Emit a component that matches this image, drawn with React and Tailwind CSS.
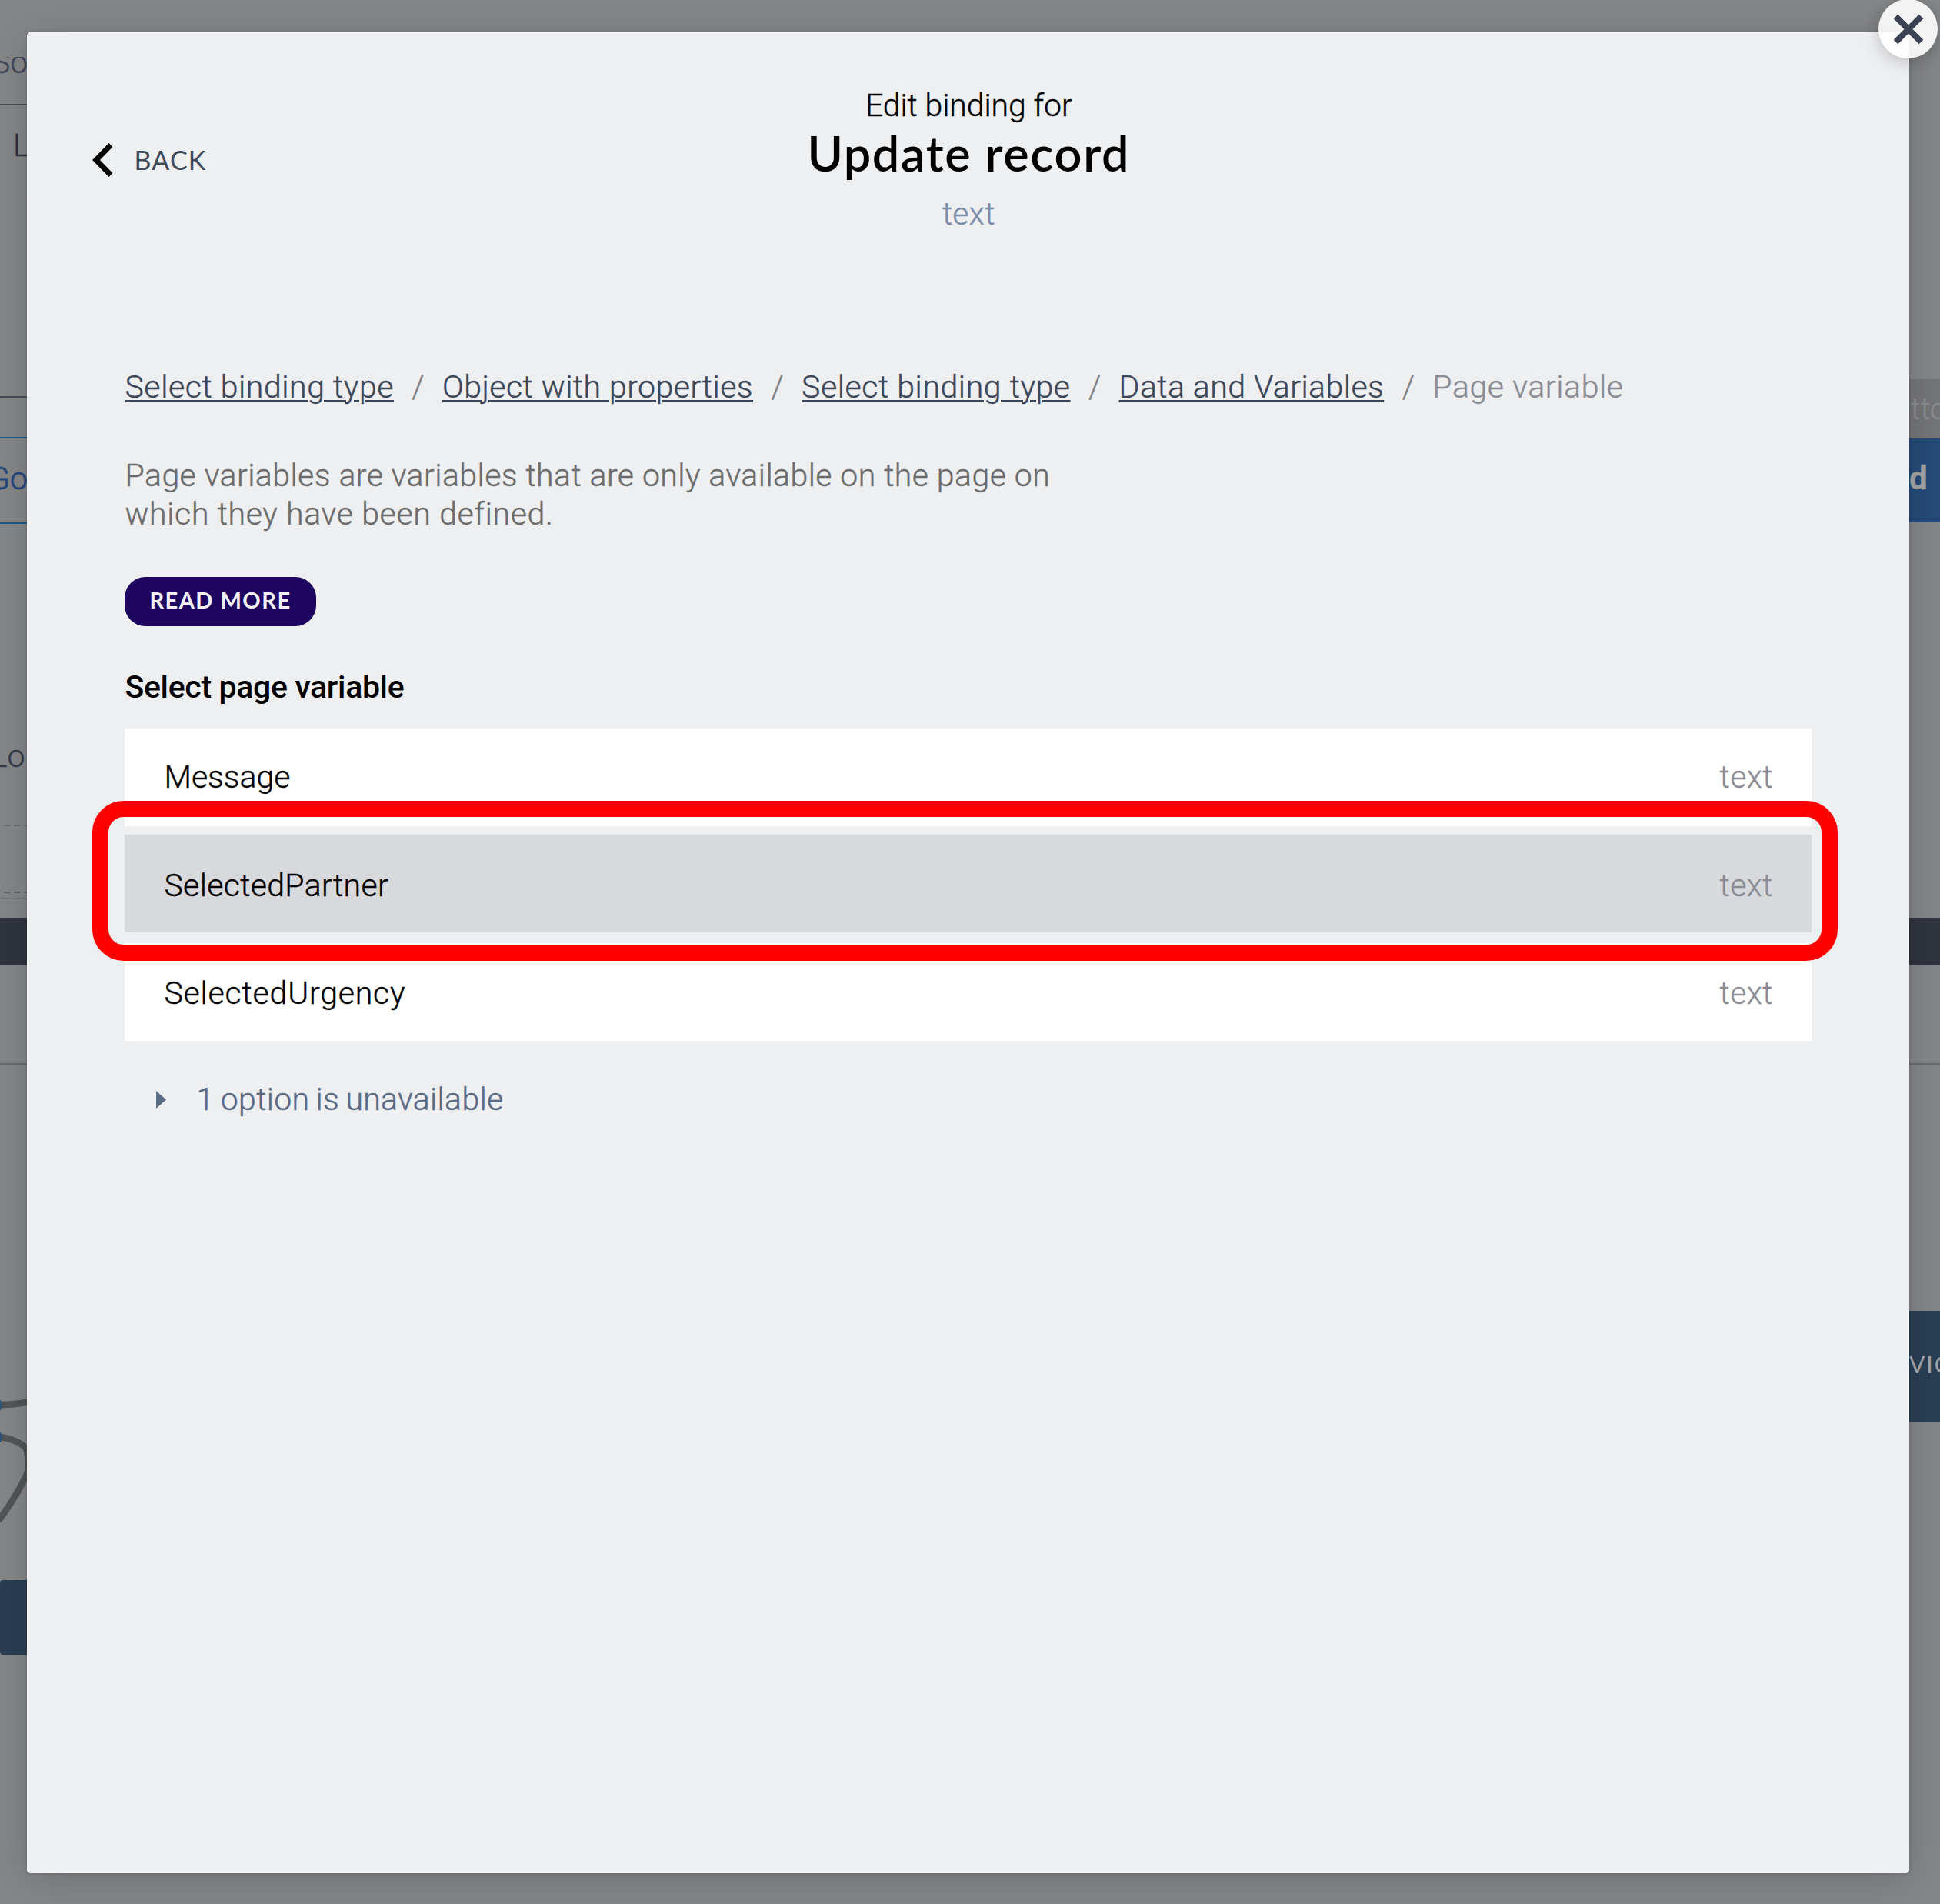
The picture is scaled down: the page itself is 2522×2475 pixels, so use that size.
const breadcrumbs = [
  { label: "Select binding type", tracking: "tracking-[0.57px]" },
  { label: "Object with properties", tracking: "tracking-[0.48px]" },
  { label: "Select binding type", tracking: "tracking-[0.57px]" },
  { label: "Data and Variables", tracking: "tracking-[0.45px]" },
];

const variables = [
  { name: "Message", type: "text", row: "h-[127px] bg-white pb-px pl-[52px]", tracking: "tracking-[-0.05px]" },
  {
    name: "SelectedPartner",
    type: "text",
    row: "mt-[11px] h-[127px] bg-[#d8d9dd] pt-[4px] pl-[52px]",
    tracking: "tracking-[0.32px]",
  },
  {
    name: "SelectedUrgency",
    type: "text",
    row: "mt-[14px] h-[127px] bg-white pt-[3px] pl-[52px]",
    tracking: "tracking-[0.8px]",
  },
];

function DashedLine() {
  return (
    <div className="h-[2px] bg-[repeating-linear-gradient(90deg,#646567_0px,#646567_8px,transparent_8px,transparent_13px)]" />
  );
}

function LeftCanvas() {
  return (
    <div className="flex h-full w-[35px] flex-col overflow-hidden whitespace-nowrap">
      <div className="mt-[74px] h-[61px] shrink-0 overflow-hidden">
        <p className="-mt-[18px] -ml-[11px] text-[#3f4858]">So</p>
      </div>
      <div className="h-[382px] shrink-0 border-y-2 border-[#474b56]">
        <p className="mt-[27px] ml-[17px] text-[#2b313c]">L</p>
      </div>
      <div className="mt-[51px] h-[113px] shrink-0 border-y-2 border-[#1c5a88]">
        <p className="mt-[27px] -ml-[15px] text-[#25497c] [-webkit-text-stroke:0.8px]">Go</p>
      </div>
      <p className="mt-[277px] -ml-[12px] text-[#353c49]">Lo</p>
      <div className="mt-[64px] ml-[5px] flex h-[89px] shrink-0 flex-col justify-between">
        <DashedLine />
        <DashedLine />
      </div>
      <div className="mt-[6px] h-[2px] shrink-0 bg-[#747577]" />
      <div className="mt-[24px] h-[62px] shrink-0 bg-[#2f343e]" />
      <div className="mt-[127px] h-[2px] shrink-0 bg-[#6a6b6d]" />
      <svg className="mt-[426px] h-[180px] w-[36px] shrink-0" viewBox="0 0 36 180" fill="none">
        <g stroke="#535456" strokeWidth="8.500">
          <path d="M0 16 Q20 16 36 12.500" />
          <path d="M0 58 C14 60 32 66 35 76 C38 92 38 100 34 108 C26 125 12 148 -2 167" />
        </g>
        <ellipse cx="0" cy="16.500" rx="3" ry="6.500" fill="#2f5577" />
        <ellipse cx="0" cy="58.500" rx="3" ry="6.500" fill="#2f5577" />
      </svg>
      <div className="mt-[64px] h-[97px] shrink-0 rounded-l-[4px] bg-[#293e53]" />
    </div>
  );
}

function RightCanvas() {
  return (
    <div className="flex h-full w-[41px] flex-col overflow-hidden whitespace-nowrap">
      <div className="mt-[493px] h-[77px] shrink-0 bg-[#747577] pt-[14px] text-[38px]">
        <p className="ml-[3px] tracking-[0.5px] text-[#8c8d91]">tto</p>
      </div>
      <div className="h-[109px] shrink-0 bg-[#264b78] pt-[27px] text-[42px]">
        <p className="ml-px font-bold text-[#a2a3a5]">d</p>
      </div>
      <div className="mt-[514px] h-[62px] shrink-0 bg-[#2f343e]" />
      <div className="mt-[127px] h-[2px] shrink-0 bg-[#6a6b6d]" />
      <div className="mt-[320px] h-[144px] shrink-0 bg-[#293f54] pt-[44px] font-[Lato,sans-serif] text-[30px] font-normal [-webkit-text-stroke:0px]">
        <p className="ml-px tracking-[2px] text-[#a5a8ab]">VIC</p>
      </div>
    </div>
  );
}

export default function App() {
  return (
    <div className="relative h-[2475px] w-[2522px] overflow-hidden bg-[#858688] font-[Roboto,sans-serif] text-[41px] leading-[50px] font-light text-black [-webkit-text-stroke:0.4px]">
      <div className="flex h-full justify-between">
        <LeftCanvas />
        <RightCanvas />
      </div>

      <section className="absolute top-[42px] left-[34.5px] h-[2393px] w-[2447.500px] rounded-[5px] bg-[#eeeff1] shadow-[0_8px_50px_rgba(0,0,0,0.16),0_0_4px_rgba(0,0,0,0.2),inset_0_0_0_1.5px_#f5f6f7]">
        <header className="grid grid-cols-[1fr_auto_1fr] pt-[70px]">
          <button className="mt-[74px] ml-[85.5px] flex h-[44px] items-center gap-[27.5px] justify-self-start font-[Lato,sans-serif] text-[34px] leading-[44px] font-normal tracking-[1.2px] text-[#414a5b] [-webkit-text-stroke:0px]">
            <svg className="h-[44px] w-[27px]" viewBox="0 0 27 44" fill="none" stroke="#000" strokeWidth="7">
              <path d="M24 2.500 L5 22 L24 41.500" />
            </svg>
            BACK
          </button>
          <div className="ml-[2px] text-center">
            <p className="tracking-[-0.1px]">Edit binding for</p>
            <h1 className="mt-[2px] font-[Lato,sans-serif] text-[63px] leading-[70px] font-semibold tracking-[1.6px] [-webkit-text-stroke:0px]">
              Update record
            </h1>
            <p className="mt-[19px] tracking-[0.3px] text-[#7c8ba6]">text</p>
          </div>
        </header>

        <div className="mr-[127px] ml-[127px] flex flex-col items-start">
          <nav className="mt-[175px] ml-px flex whitespace-nowrap">
            {breadcrumbs.map((crumb, i) => (
              <span key={i} className="flex">
                <a className={`text-[#3b4658] underline decoration-[3px] underline-offset-[3px] ${crumb.tracking}`}>
                  {crumb.label}
                </a>
                <span className="w-[63px] text-center text-[#7f8084]">/</span>
              </span>
            ))}
            <span className="tracking-[0.6px] text-[#8b8c93]">Page variable</span>
          </nav>

          <p className="mt-[65px] ml-px whitespace-nowrap text-[#6b6b6b]">
            <span className="block tracking-[0.44px]">
              Page variables are variables that are only available on the page on
            </span>
            <span className="block tracking-[0.65px]">which they have been defined.</span>
          </p>

          <button className="mt-[57px] h-[64px] w-[249px] rounded-[27px] bg-[#1e0560] pb-[5px] pl-px font-[Lato,sans-serif] text-[29px] leading-[59px] font-bold tracking-[1.5px] text-[#f4f2f8] [-webkit-text-stroke:0px]">
            READ MORE
          </button>

          <h2 className="mt-[54px] ml-px font-medium tracking-[-0.34px] [-webkit-text-stroke:0px]">
            Select page variable
          </h2>

          <ul className="mt-[29px] w-full">
            {variables.map((v) => (
              <li key={v.name} className={`flex items-center justify-between pr-[50px] ${v.row}`}>
                <span className={v.tracking}>{v.name}</span>
                <span className="tracking-[0.5px] text-[#8a8b93]">{v.type}</span>
              </li>
            ))}
          </ul>

          <button className="mt-[51px] ml-[41px] flex items-center gap-[40px] text-[#596983]">
            <svg className="h-[23px] w-[13px]" viewBox="0 0 13 23" fill="#5a6b86">
              <path d="M0 0 L13 11.500 L0 23 Z" />
            </svg>
            <span className="tracking-[0.3px] [word-spacing:-2px]">1 option is unavailable</span>
          </button>
        </div>
      </section>

      <button className="absolute -top-px left-[2442px] flex size-[77px] items-center justify-center rounded-full bg-white/90 shadow-[0_4px_22px_rgba(0,0,0,0.22)]">
        <svg className="size-[40px]" viewBox="0 0 40 40" stroke="#3a4254" strokeWidth="8">
          <path d="M3.500 3.500 L36.500 36.500 M36.500 3.500 L3.500 36.500" />
        </svg>
      </button>

      <div className="pointer-events-none absolute top-[1041px] left-[120px] h-[208px] w-[2269px] rounded-[41px] border-[21px] border-[#ff0000]" />
    </div>
  );
}
